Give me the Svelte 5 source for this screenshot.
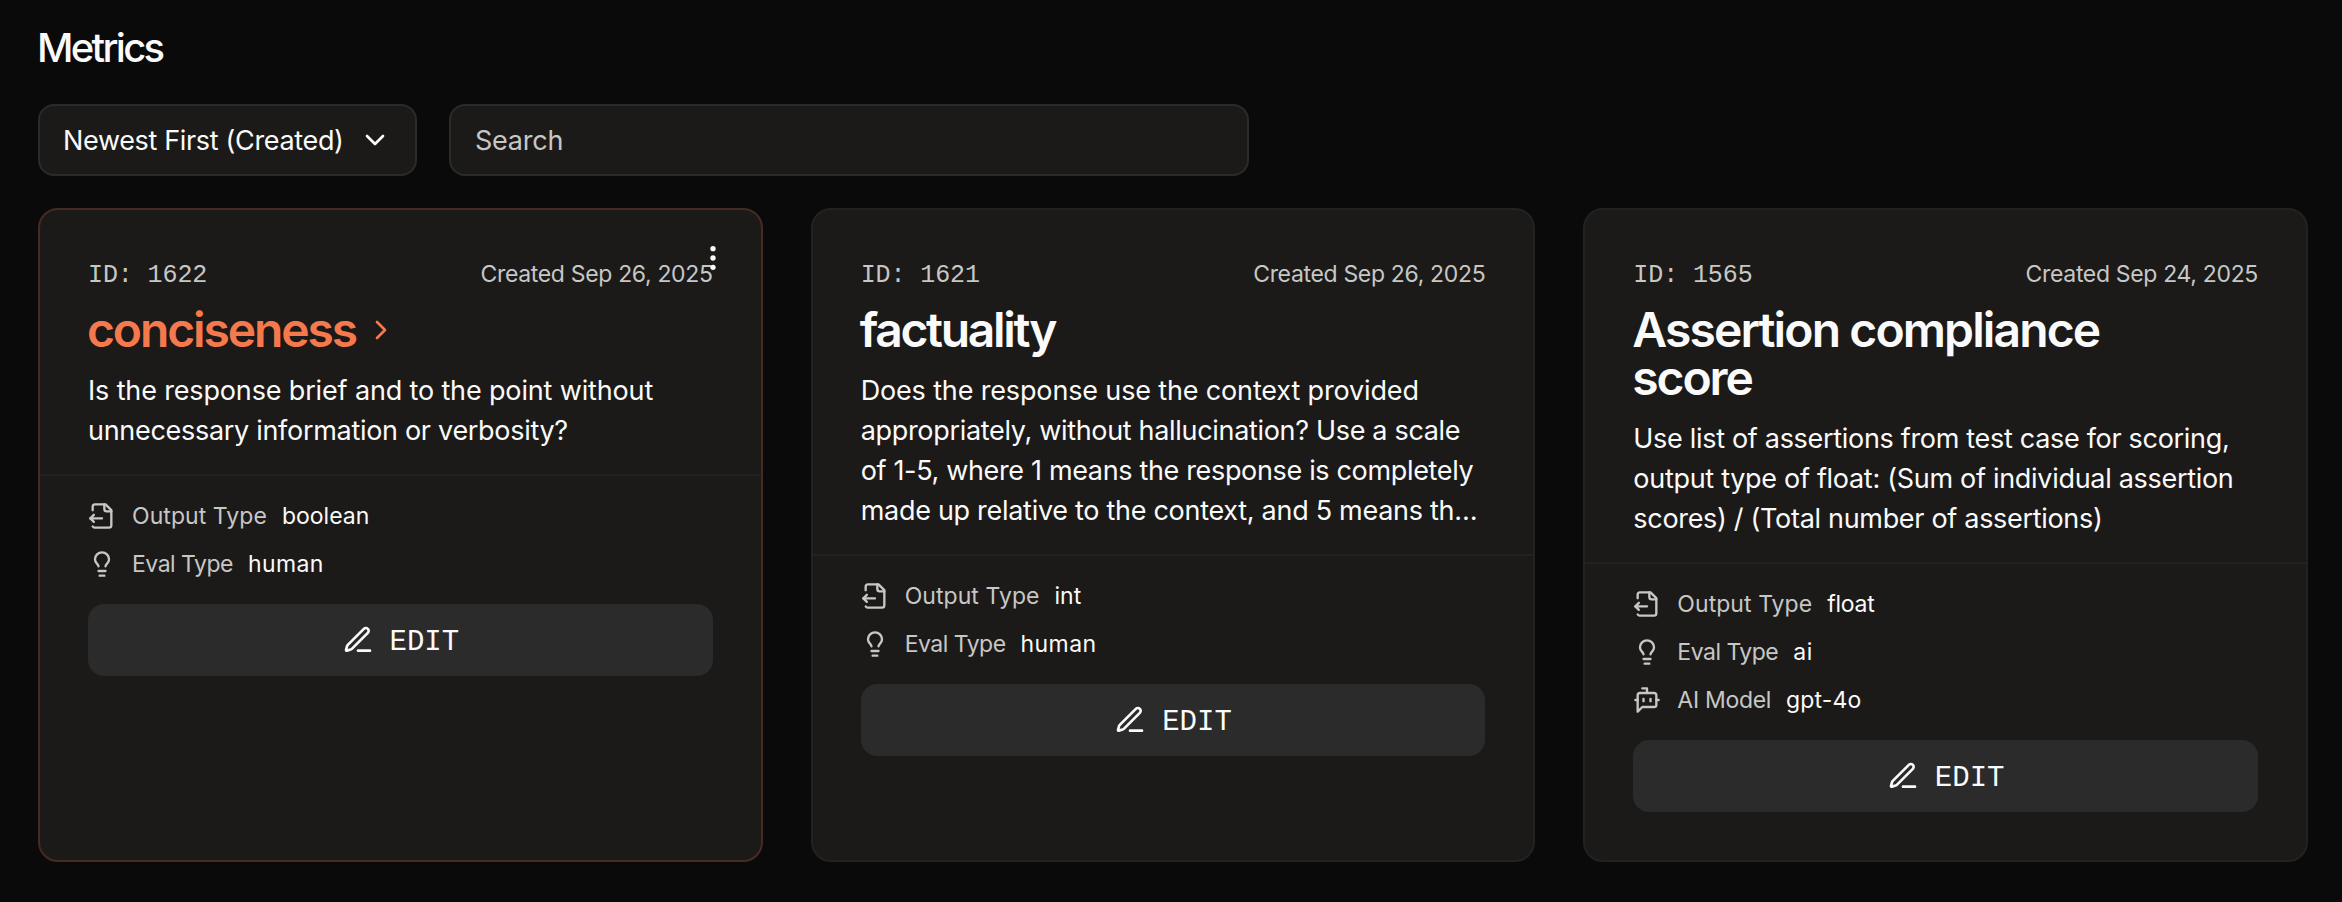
<script>
  const metrics = [
    {
      id: 1622,
      created: 'Created Sep 26, 2025',
      active: true,
      title: [['conciseness', -2.12]],
      description: [
        ['Is the response brief and to the point without', -0.15],
        ['unnecessary information or verbosity?', -0.3]
      ],
      fields: [
        { icon: 'output', label: 'Output Type', track: 0.06, value: 'boolean', valueTrack: 0 },
        { icon: 'bulb', label: 'Eval Type', track: -0.5, value: 'human', valueTrack: 0.4 }
      ]
    },
    {
      id: 1621,
      created: 'Created Sep 26, 2025',
      active: false,
      title: [['factuality', -2.3]],
      description: [
        ['Does the response use the context provided', -0.15],
        ['appropriately, without hallucination? Use a scale', -0.32],
        ['of 1-5, where 1 means the response is completely', -0.34],
        ['made up relative to the context, and 5 means th…', -0.29]
      ],
      fields: [
        { icon: 'output', label: 'Output Type', track: 0.06, value: 'int', valueTrack: 0 },
        { icon: 'bulb', label: 'Eval Type', track: -0.5, value: 'human', valueTrack: 0.4 }
      ]
    },
    {
      id: 1565,
      created: 'Created Sep 24, 2025',
      active: false,
      title: [['Assertion compliance', -1.88], ['score', -2.1]],
      description: [
        ['Use list of assertions from test case for scoring,', -0.31],
        ['output type of float: (Sum of individual assertion', -0.3],
        ['scores) / (Total number of assertions)', -0.31]
      ],
      fields: [
        { icon: 'output', label: 'Output Type', track: 0.06, value: 'float', valueTrack: -0.25 },
        { icon: 'bulb', label: 'Eval Type', track: -0.5, value: 'ai', valueTrack: 0.5 },
        { icon: 'bot', label: 'AI Model', track: -0.3, value: 'gpt-4o', valueTrack: 0.15 }
      ]
    }
  ];

  const icons = {
    output: [
      'M14 2v4a2 2 0 0 0 2 2h4',
      'M4 7V4a2 2 0 0 1 2-2h9l5 5v13a2 2 0 0 1-2 2H6.06a2 2 0 0 1-2-1',
      'm5 11-3 3',
      'm5 17-3-3h10'
    ],
    bulb: [
      'M15 14c.2-1 .7-1.7 1.5-2.5 1-.9 1.5-2.2 1.5-3.5A6 6 0 0 0 6 8c0 1 .2 2.2 1.5 3.5.7.7 1.3 1.5 1.5 2.5',
      'M9 18h6',
      'M10 22h4'
    ],
    bot: [
      'M12 6V2H8',
      'm8 18-4 4V8a2 2 0 0 1 2-2h12a2 2 0 0 1 2 2v8a2 2 0 0 1-2 2Z',
      'M2 12h2',
      'M9 11v2',
      'M15 11v2',
      'M20 12h2'
    ],
    pen: [
      'M12 20h9',
      'M16.376 3.622a1 1 0 0 1 3.002 3.002L7.368 18.635a2 2 0 0 1-.855.506l-2.872.838a.5.5 0 0 1-.62-.62l.838-2.872a2 2 0 0 1 .506-.854z'
    ],
    down: ['m6 9 6 6 6-6'],
    right: ['m9 18 6-6-6-6']
  };
</script>

{#snippet icon(name, size)}
  <svg class="icon" width={size} height={size} viewBox="0 0 24 24" aria-hidden="true">
    {#each icons[name] as d}<path {d} />{/each}
  </svg>
{/snippet}

<main class="page">
  <h1>Metrics</h1>

  <div class="controls">
    <button class="select">
      <span>Newest First (Created)</span>
      {@render icon('down', 32)}
    </button>
    <div class="search">Search</div>
  </div>

  <section class="cards">
    {#each metrics as m}
      <article class="card" class:active={m.active}>
        <div class="head">
          <div class="meta">
            <span class="id">ID: {m.id}</span>
            <span class="created">{m.created}</span>
          </div>
          <h2>
            <span class="title">
              {#each m.title as [line, track]}
                <span class="line" style="letter-spacing: {track}px">{line}</span>
              {/each}
            </span>
            {#if m.active}{@render icon('right', 32)}{/if}
          </h2>
          <p>
            {#each m.description as [line, track]}
              <span class="line" style="letter-spacing: {track}px">{line}</span>
            {/each}
          </p>
        </div>
        <div class="body">
          <div class="fields">
            {#each m.fields as f}
              <div class="field">
                {@render icon(f.icon, 28)}
                <span class="label" style="letter-spacing: {f.track}px">{f.label}</span>
                <span class="value" style="letter-spacing: {f.valueTrack}px">{f.value}</span>
              </div>
            {/each}
          </div>
          <button class="edit">
            {@render icon('pen', 32)}
            <span>EDIT</span>
          </button>
        </div>
        {#if m.active}
          <button class="more" aria-label="More">
            <svg width="32" height="32" viewBox="0 0 24 24" fill="currentColor">
              <circle cx="12" cy="5" r="2" />
              <circle cx="12" cy="12" r="2" />
              <circle cx="12" cy="19" r="2" />
            </svg>
          </button>
        {/if}
      </article>
    {/each}
  </section>
</main>

<style>
  :global(body) {
    background: #0a0a0a;
  }

  .page {
    box-sizing: border-box;
    min-height: 902px;
    padding: 24px 34px 40px 38px;
    font-family: Inter, sans-serif;
    font-size: 27px;
    color: #fafafa;
  }

  h1 {
    margin: 0 0 32px -1px;
    font-size: 40px;
    font-weight: 550;
    line-height: 48px;
    letter-spacing: -2.7px;
  }

  button {
    margin: 0;
    border: 0;
    padding: 0;
    background: none;
    color: inherit;
    font: inherit;
  }

  .icon {
    display: block;
    flex: none;
    fill: none;
    stroke: currentColor;
    stroke-width: 2;
    stroke-linecap: round;
    stroke-linejoin: round;
  }

  .controls {
    display: flex;
    gap: 32px;
    margin-bottom: 32px;
  }

  .select,
  .search {
    box-sizing: border-box;
    display: flex;
    align-items: center;
    height: 72px;
    padding: 0 24px;
    border: 2px solid #2b2b2b;
    border-radius: 16px;
    background: #1b1a18;
  }

  .select {
    justify-content: space-between;
    width: 379px;
    white-space: nowrap;
    letter-spacing: -0.34px;
  }

  .select span {
    margin-left: -1px;
  }

  .search {
    width: 800px;
    color: #c7c7c6;
    letter-spacing: -0.25px;
  }

  .cards {
    display: grid;
    grid-template-columns: repeat(3, 1fr);
    gap: 48px;
  }

  .card {
    position: relative;
    border: 2px solid #222222;
    border-radius: 20px;
    background: #1b1a18;
  }

  .card.active {
    border-color: #472b22;
  }

  .head {
    display: flex;
    flex-direction: column;
    gap: 16px;
    padding: 48px 48px 24px;
    border-bottom: 2px solid #222222;
  }

  .meta {
    display: flex;
    justify-content: space-between;
    align-items: baseline;
    height: 32px;
    line-height: 32px;
    color: #c7c7c6;
  }

  .id {
    font-family: 'Liberation Mono', monospace;
    font-size: 25px;
    letter-spacing: -0.1px;
    white-space: pre;
  }

  .created {
    font-size: 23px;
    letter-spacing: -0.33px;
  }

  h2 {
    display: flex;
    align-items: center;
    gap: 9px;
    margin: 0 0 0 -1px;
    font-size: 48px;
    font-weight: 600;
    line-height: 48px;
  }

  .active h2 {
    color: #f5794d;
  }

  .line {
    display: block;
    white-space: nowrap;
  }

  p {
    margin: 0;
    padding-top: 1px;
    margin-bottom: -1px;
    line-height: 40px;
  }

  .body {
    display: flex;
    flex-direction: column;
    gap: 24px;
    padding: 24px 48px 48px;
  }

  .fields {
    display: flex;
    flex-direction: column;
    gap: 16px;
  }

  .field {
    display: flex;
    align-items: center;
    gap: 16px;
    height: 32px;
    font-size: 23px;
    line-height: 32px;
    color: #c7c7c6;
  }

  .value {
    margin-left: -1px;
    color: #fafafa;
  }

  .edit {
    display: flex;
    align-items: center;
    justify-content: center;
    gap: 16px;
    height: 72px;
    border-radius: 16px;
    background: #2b2b2b;
    font-family: 'Liberation Mono', monospace;
    font-size: 29px;
    line-height: 36px;
  }

  .edit span {
    padding-top: 6px;
  }

  .more {
    position: absolute;
    top: 32px;
    right: 32px;
    display: flex;
  }
</style>
